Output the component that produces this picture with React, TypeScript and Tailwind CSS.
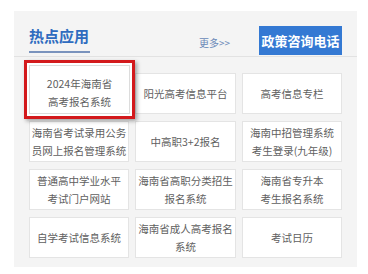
import React from 'react'

const apps: string[][] = [
  ['2024年海南省', '高考报名系统'],
  ['阳光高考信息平台'],
  ['高考信息专栏'],
  ['海南省考试录用公务', '员网上报名管理系统'],
  ['中高职3+2报名'],
  ['海南中招管理系统', '考生登录(九年级)'],
  ['普通高中学业水平', '考试门户网站'],
  ['海南省高职分类招生', '报名系统'],
  ['海南省专升本', '考生报名系统'],
  ['自学考试信息系统'],
  ['海南省成人高考报名', '系统'],
  ['考试日历'],
]

function Cell({ lines }: { lines: string[] }) {
  return (
    <div className="h-[41px] bg-white border border-[#e4e4e4] flex flex-col items-center justify-center text-center text-[10.5px] leading-[18px] text-[#606060]">
      {lines.map((l, i) => (
        <div key={i} className="whitespace-nowrap">{l}</div>
      ))}
    </div>
  )
}

export default function App() {
  return (
    <div
      className="w-[368px] h-[274px] bg-white pt-[11px] px-[14px]"
      style={{ fontFamily: '"Microsoft YaHei", "Noto Sans CJK SC", sans-serif' }}
    >
      <div className="w-[343px] h-[256px] bg-[#f4f4f4] px-[15px]">
        {/* header */}
        <div className="flex items-end pt-[15px] border-b border-[#e2e2e2] -mx-[15px] px-[15px]">
          <div className="flex flex-col">
            <div className="h-[20px] leading-[20px] text-[15px] font-bold text-[#2f6cbf]">热点应用</div>
            <div className="h-[2px] w-[61px] mt-[5px] mb-[3px] bg-[#7a93bd]" />
          </div>
          <div className="flex-1" />
          <div className="self-center mt-[3px] mr-[29px] text-[10px] text-[#6a89b8]">更多&gt;&gt;</div>
          <div className="w-[83px] h-[29px] mb-[1px] bg-[#3479d3] text-white text-[13px] font-bold flex items-center justify-center">
            政策咨询电话
          </div>
        </div>

        {/* grid */}
        <div className="mt-[16px] grid grid-cols-[100px_101px_100px] gap-x-[6px] gap-y-[7px]">
          {apps.map((lines, i) =>
            i === 0 ? (
              <div key={i} className="relative h-[41px]">
                <div className="absolute -top-[13px] -left-[5px] -right-[6px] -bottom-[5px] border-[3px] border-[#d3191c] bg-white shadow-[2px_2px_4px_rgba(0,0,0,0.35)] p-[2px]">
                  <div className="w-full h-full border border-[#dcdcdc] flex flex-col items-center justify-center pt-[7px] text-[10.5px] leading-[18px] text-[#606060]">
                    {lines.map((l, j) => (
                      <div key={j} className="whitespace-nowrap">{l}</div>
                    ))}
                  </div>
                </div>
              </div>
            ) : (
              <Cell key={i} lines={lines} />
            )
          )}
        </div>
      </div>
    </div>
  )
}
